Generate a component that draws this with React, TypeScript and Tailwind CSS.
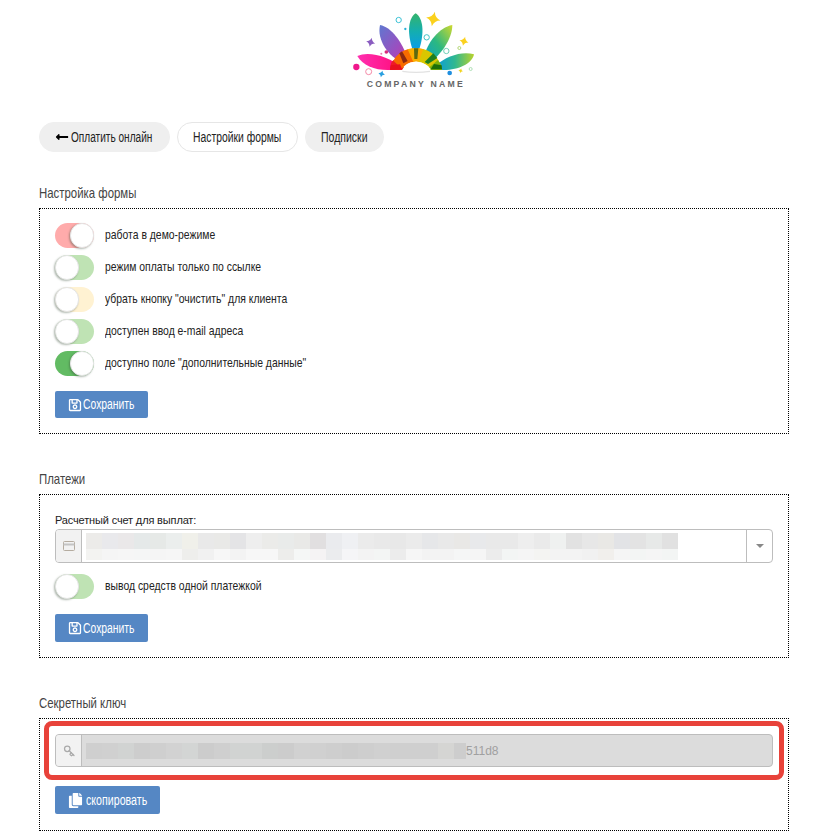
import { FaRegSave, FaCopy, FaLongArrowAltLeft } from 'react-icons/fa'
import { Key } from 'lucide-react'

const sans = { fontFamily: '"Liberation Sans", Arial, sans-serif' }

const topRow = ['#ecebe9','#e9e9ec','#eae8e9','#e5e9e9','#e6e9e7','#ebeeed','#f0f0ea','#e9e9e9','#e9e9e7','#e4e4e6','#eeeeee','#ebebe9','#e9ebea','#e9e9e7','#e1dfe0','#eaebee','#eff0f3','#ebebeb','#e9e9e9','#e8e8e8','#ebebeb','#e6e7e9','#e9e9e9','#e9e8e6','#e8e9eb','#e9e9e9','#e9e9e9','#eeeeee','#eaeaea','#eff1f0','#e2e2e2','#e7e7e7','#e9e8e5','#e2e3e6','#e3e3e3','#e7e9e8','#e1e1e1']
const bottomRow = ['#f3f3f1','#f5f5f5','#f6f6f6','#f5f6f6','#f5f5f5','#f6f6f6','#eeeeec','#f1f1f1','#f7f7f7','#f3f3f3','#f7f7f7','#f7f7f7','#ededeb','#f5f7f6','#f5f3f4','#ebecee','#f5f5f7','#f3f3f3','#f3f5f4','#ececec','#f6f6f6','#f3f3f3','#f3f3f3','#f5f6f6','#f5f5f5','#ececec','#f3f5f4','#f5f5f5','#f4f4f2','#f3f3f3','#f3f3f3','#f1f1f1','#f1efec','#f5f5f5','#f3f5f4','#f5f5f5','#f3f5f4']
const keyRow = ['#cfcfcf','#d0d0d0','#d1d3d2','#cdcdcd','#cfcfcf','#d2d2d2','#d3d5d4','#cccccc','#cfcfcf','#d1d3d2','#d1d3d2','#cccecd','#cccccc','#d1d1d1','#d0d0d0','#cecece','#cccccc','#cecece','#d0d0d0','#cfcfcf','#cfcfcf','#cfcfcf','#d5d5d3','#cdcdcd']

function Narrow({ children, scale = 'scale-x-[0.77]' }: { children: React.ReactNode; scale?: string }) {
  return <span className={`inline-block whitespace-nowrap origin-left ${scale}`} style={sans}>{children}</span>
}

function Toggle({ track, on }: { track: string; on?: boolean }) {
  return (
    <div className={`w-[39px] h-[25px] rounded-full flex ${track} ${on ? 'justify-end' : 'justify-start'}`}>
      <div className="w-[24px] h-[25px] rounded-full bg-white border border-[#e4e4e4] shadow-[-1px_1px_2px_rgba(60,80,60,0.4)]" />
    </div>
  )
}

function ToggleRow({ track, on, label }: { track: string; on?: boolean; label: string }) {
  return (
    <div className="flex items-center h-[25px] gap-[11px]">
      <Toggle track={track} on={on} />
      <span className="text-[13.5px] text-[#222] -mt-[2px]"><Narrow>{label}</Narrow></span>
    </div>
  )
}

function SaveButton({ height }: { height: string }) {
  return (
    <button className={`flex items-center pl-[13px] w-[93px] rounded-[2px] bg-[#5587c4] text-white text-[14px] ${height}`}>
      <FaRegSave className="w-[14px] h-[14px] mr-[1px] shrink-0" />
      <Narrow scale="scale-x-[0.74]">Сохранить</Narrow>
    </button>
  )
}

function Pill({ children, active, width }: { children: React.ReactNode; active?: boolean; width: string }) {
  return (
    <button
      className={`h-[30px] pl-[15px] rounded-full flex items-center text-[14px] text-[#222] border ${width} ${active ? 'bg-white border-[#e6e6e6]' : 'bg-[#efefef] border-[#efefef]'}`}
    >
      {children}
    </button>
  )
}

function star(x: number, y: number, r: number, rot: number, fill: string) {
  const k = r * 0.18
  return (
    <path
      transform={`rotate(${rot} ${x} ${y})`}
      d={`M${x} ${y - r} Q${x + k} ${y - k} ${x + r} ${y} Q${x + k} ${y + k} ${x} ${y + r} Q${x - k} ${y + k} ${x - r} ${y} Q${x - k} ${y - k} ${x} ${y - r}Z`}
      fill={fill}
    />
  )
}

// drawn in 3x coordinates, then scaled down by the viewBox
function Logo() {
  return (
    <div className="h-[92px]">
      <svg width="150" height="100" viewBox="0 0 450 300" className="ml-[301px]">
        <defs>
          <linearGradient id="p1" x1="0" y1="0" x2="1" y2="0"><stop offset="0" stopColor="#ff2fb0" /><stop offset="1" stopColor="#ff0a78" /></linearGradient>
          <linearGradient id="p2" x1="0" y1="0" x2="1" y2="1"><stop offset="0" stopColor="#5f78d0" /><stop offset="0.6" stopColor="#9a4fc0" /><stop offset="1" stopColor="#c838a0" /></linearGradient>
          <linearGradient id="p3" x1="0" y1="0" x2="0" y2="1"><stop offset="0" stopColor="#34b36c" /><stop offset="0.5" stopColor="#14aeb0" /><stop offset="1" stopColor="#0a9cea" /></linearGradient>
          <linearGradient id="p4" x1="1" y1="0" x2="0" y2="1"><stop offset="0" stopColor="#cfd92e" /><stop offset="0.5" stopColor="#2cb880" /><stop offset="1" stopColor="#0a9fd0" /></linearGradient>
          <linearGradient id="p5" x1="1" y1="0" x2="0" y2="0"><stop offset="0" stopColor="#b9d22c" /><stop offset="0.5" stopColor="#30b890" /><stop offset="1" stopColor="#0a9cdc" /></linearGradient>
        </defs>
        <path d="M52 168 C85 152 145 168 190 204 L150 210 C108 212 68 197 52 168Z" fill="url(#p1)" />
        <path d="M120 75 C155 82 186 125 204 178 L186 188 C146 168 110 122 120 75Z" fill="url(#p2)" />
        <path d="M227 40 C250 55 254 100 237 150 L218 150 C201 100 204 55 227 40Z" fill="url(#p3)" />
        <path d="M337 75 C337 118 300 168 268 188 L251 176 C260 128 298 82 337 75Z" fill="url(#p4)" />
        <path d="M402 163 C368 152 318 168 288 196 L305 210 C352 212 397 192 402 163Z" fill="url(#p5)" />

        <path d="M150 210 Q150 190 160 180 L192 202 L186 210Z" fill="#ee1c25" />
        <path d="M160 182 Q175 155 205 147 L222 185 Q198 188 186 206Z" fill="#f76b00" />
        <path d="M203 148 Q228 140 252 148 L238 186 Q228 183 220 186Z" fill="#fbae00" />
        <path d="M250 147 Q280 155 296 182 L270 204 Q258 190 236 186Z" fill="#d9c600" />
        <path d="M294 180 Q306 195 306 210 L272 210 Q272 206 268 202Z" fill="#7fb30a" />
        <path d="M178 160 L186 154 L203 183 L190 190Z" fill="#8c2a10" />
        <path d="M222 145 L235 145 L232 177 L223 177Z" fill="#5e6a10" />
        <path d="M280 160 L254 186 L264 192 L292 174Z" fill="#1f7f1f" />
        <path d="M152 196 L180 193 L186 208 L150 210Z" fill="#e8101e" />
        <path d="M272 208 L282 192 L305 196 L306 208Z" fill="#1c6f08" />
        <path d="M187 212 Q195 186 228 185 Q262 186 270 212Z" fill="#ffffff" />
        <path d="M187 214 Q228 220 270 214" stroke="#e2e2e2" strokeWidth="4" fill="none" />

        {star(280, 57, 22, 12, '#fbd11c')}
        {star(372, 124, 14, 14, '#fbd11c')}
        {star(92, 127, 14, 14, '#8a5cc0')}
        {star(125, 222, 10, 14, '#2aa0e0')}
        {star(362, 212, 7, 14, '#f2d31c')}
        <circle cx="176" cy="60" r="8" fill="none" stroke="#3ec3d6" strokeWidth="3" />
        <circle cx="196" cy="87" r="3.5" fill="#2ab0d8" />
        <circle cx="260" cy="112" r="8" fill="none" stroke="#3ec3c6" strokeWidth="3" />
        <circle cx="319" cy="153" r="8" fill="none" stroke="#6fd0b8" strokeWidth="3" />
        <circle cx="358" cy="144" r="4.5" fill="none" stroke="#a8d060" strokeWidth="2.5" />
        <circle cx="392" cy="207" r="4.5" fill="none" stroke="#a0d8a8" strokeWidth="2.5" />
        <circle cx="49" cy="201" r="9.5" fill="#f0188c" />
        <circle cx="86" cy="215" r="9" fill="none" stroke="#f58aa8" strokeWidth="3" />
        <circle cx="139" cy="156" r="5.5" fill="#d82a7a" />
        <circle cx="124" cy="161" r="3" fill="#e87ab0" />
        <circle cx="329" cy="219" r="7" fill="#1f8fe0" />
        <text x="80" y="262" textLength="288" fontSize="26" fontWeight="700" fill="#666666" style={sans}>COMPANY NAME</text>
      </svg>
    </div>
  )
}

function SectionTitle({ children }: { children: React.ReactNode }) {
  return (
    <h3 className="h-[25px] text-[15px] leading-[20px] text-[#444] font-normal -translate-y-[1px]">
      <Narrow scale="scale-x-[0.76]">{children}</Narrow>
    </h3>
  )
}

export default function App() {
  return (
    <div className="w-[840px] h-[840px] overflow-hidden bg-white pl-[39px] pr-[51px]">
      <Logo />

      <div className="flex gap-[7px] mt-[30px]">
        <Pill width="w-[131px]">
          <FaLongArrowAltLeft className="w-[14px] h-[14px] mr-[2px] text-black shrink-0" />
          <Narrow scale="scale-x-[0.72]">Оплатить онлайн</Narrow>
        </Pill>
        <Pill active width="w-[121px]"><Narrow scale="scale-x-[0.74]">Настройки формы</Narrow></Pill>
        <Pill width="w-[79px]"><Narrow scale="scale-x-[0.75]">Подписки</Narrow></Pill>
      </div>

      <div className="mt-[31px]"><SectionTitle>Настройка формы</SectionTitle></div>
      <div className="border border-dotted border-black h-[226px] pt-[14px] px-[15px]">
        <div className="flex flex-col gap-[7px]">
          <ToggleRow track="bg-[#ffabab]" on label="работа в демо-режиме" />
          <ToggleRow track="bg-[#bfe3b4]" label="режим оплаты только по ссылке" />
          <ToggleRow track="bg-[#fff2d2]" label={'убрать кнопку "очистить" для клиента'} />
          <ToggleRow track="bg-[#bfe3b4]" label="доступен ввод e-mail адреса" />
          <ToggleRow track="bg-[#62bb63]" on label={'доступно поле "дополнительные данные"'} />
        </div>
        <div className="mt-[15px]"><SaveButton height="h-[27px]" /></div>
      </div>

      <div className="mt-[35px]"><SectionTitle>Платежи</SectionTitle></div>
      <div className="border border-dotted border-black h-[164px] pt-[18px] px-[15px]">
        <div className="text-[11px] leading-[16px] tracking-[-0.15px] text-[#222] -translate-y-[1px]" style={sans}>Расчетный счет для выплат:</div>
        <div className="flex h-[34px] border border-[#bdbdbd] rounded-[4px] overflow-hidden">
          <div className="w-[26px] shrink-0 flex items-center justify-center bg-[#f2f2f2] border-r border-[#bdbdbd]">
            <svg width="12" height="10" viewBox="0 0 12 10" fill="none">
              <rect x="0.5" y="0.5" width="11" height="9" rx="1" stroke="#b5aca0" />
              <rect x="0.5" y="2.5" width="11" height="2" fill="#c4c4c4" />
            </svg>
          </div>
          <div className="flex-1 pl-[4px] pt-[3px]">
            <div className="flex">
              {topRow.map((c, i) => <div key={i} className="w-[16px] h-[16px]" style={{ backgroundColor: c }} />)}
            </div>
            <div className="flex">
              {bottomRow.map((c, i) => <div key={i} className="w-[16px] h-[11px]" style={{ backgroundColor: c }} />)}
            </div>
          </div>
          <div className="w-[26px] shrink-0 flex items-center justify-center border-l border-[#bdbdbd]">
            <div className="w-0 h-0 border-x-[4px] border-x-transparent border-t-[4px] border-t-[#888]" />
          </div>
        </div>
        <div className="mt-[11px]">
          <ToggleRow track="bg-[#bfe3b4]" label="вывод средств одной платежкой" />
        </div>
        <div className="mt-[15px]"><SaveButton height="h-[28px]" /></div>
      </div>

      <div className="mt-[35px]"><SectionTitle>Секретный ключ</SectionTitle></div>
      <div className="relative border border-dotted border-black h-[113px] pt-[15px] px-[15px]">
        <div className="flex h-[33px] border border-[#bdbdbd] rounded-[4px] overflow-hidden bg-[#dcdcdc]">
          <div className="w-[26px] shrink-0 flex items-center justify-center bg-[#f2f2f2] border-r border-[#bdbdbd]">
            <Key className="w-[12px] h-[12px] text-[#aaa] rotate-90" strokeWidth={2.5} />
          </div>
          <div className="flex-1 flex items-center pl-[4px]">
            <div className="flex">
              {keyRow.map((c, i) => <div key={i} className={`h-[16px] ${i === keyRow.length - 1 ? 'w-[12px]' : 'w-[16px]'}`} style={{ backgroundColor: c }} />)}
            </div>
            <span className="text-[12px] text-[#a0a0a0]" style={sans}>511d8</span>
          </div>
        </div>
        <button className="mt-[19px] flex items-center pl-[13px] w-[105px] h-[28px] rounded-[2px] bg-[#5587c4] text-white text-[14px]">
          <FaCopy className="w-[15px] h-[15px] mr-[3px] shrink-0" />
          <Narrow scale="scale-x-[0.76]">скопировать</Narrow>
        </button>
        <div className="absolute left-[4px] top-[2px] w-[740px] h-[59px] border-[5px] border-[#e8423a] rounded-[8px]" />
      </div>
    </div>
  )
}
